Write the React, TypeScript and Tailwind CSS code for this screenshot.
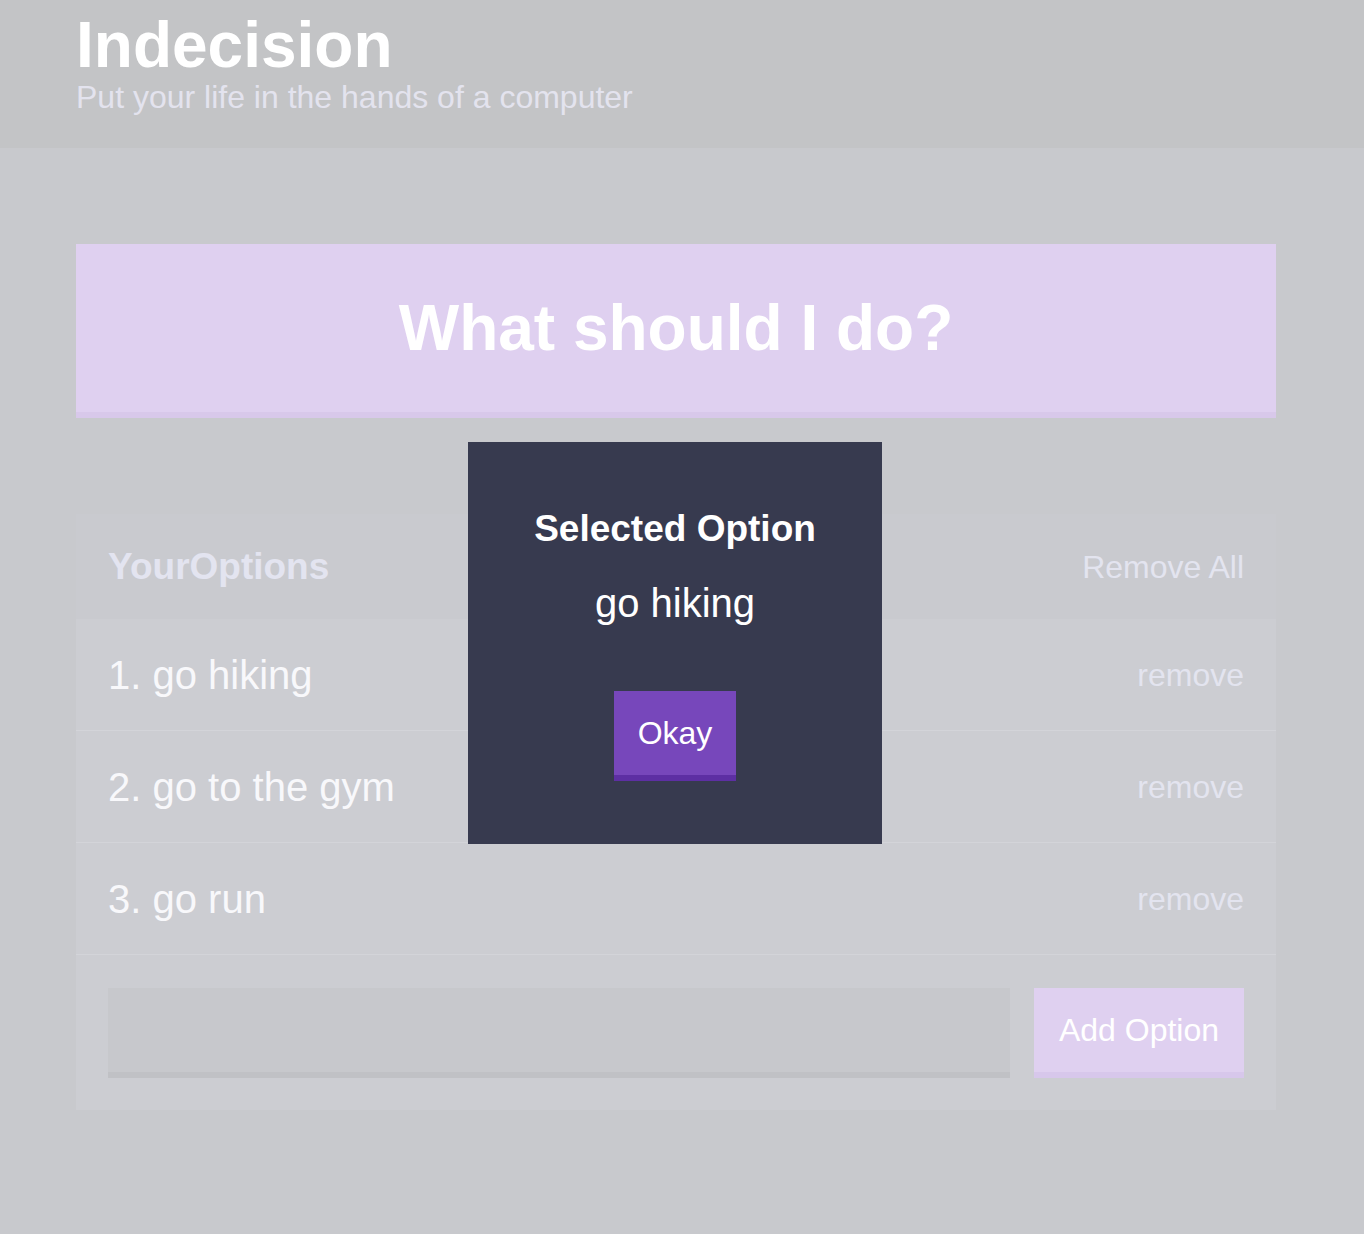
const options = ["go hiking", "go to the gym", "go run"];

function Option({ index, text }: { index: number; text: string }) {
  return (
    <div className="flex h-[112px] items-center justify-between border-b border-[#d3d4d9] bg-[#cccdd2] px-8">
      <p className="text-[40px] leading-none text-[#f8f8fb]">
        {index}. {text}
      </p>
      <button className="text-[32px] leading-none text-[#e3e4ef]">remove</button>
    </div>
  );
}

export default function App() {
  return (
    <div className="relative min-h-[1234px] bg-[#c8c9cd] font-['Liberation_Sans',Arial,sans-serif]">
      <header className="h-[148px] bg-[#c3c4c6] pl-[76px] pt-[13px]">
        <h1 className="text-[64px] font-bold leading-none text-white">Indecision</h1>
        <h2 className="mt-[4px] text-[32px] leading-none text-[#e3e3ee]">Put your life in the hands of a computer</h2>
      </header>

      <main className="ml-[76px] w-[1200px] pb-[124px]">
        <button className="mt-[96px] flex h-[174px] w-full items-center justify-center border-b-[6px] border-[#d8c8ea] bg-[#dfd0f0] text-[64px] font-bold leading-none text-white">
          What should I do?
        </button>

        <div className="mt-[96px] bg-[#cccdd2]">
          <div className="flex h-[105px] items-center justify-between bg-[#c9cacf] px-8">
            <h3 className="text-[37px] font-bold leading-none text-[#e3e4f0]">YourOptions</h3>
            <button className="text-[32px] leading-none text-[#e3e4ef]">Remove All</button>
          </div>
          {options.map((o, i) => (
            <Option key={o} index={i + 1} text={o} />
          ))}
          <form className="flex gap-6 px-8 pb-[32px] pt-[33px]">
            <input className="h-[90px] flex-1 border-b-[6px] border-[#c0c1c5] bg-[#c7c8cc] outline-none" />
            <button type="button" className="h-[90px] w-[210px] border-b-[6px] border-[#d7c7eb] bg-[#dfd0f0] text-[32px] leading-none text-white">
              Add Option
            </button>
          </form>
        </div>
      </main>

      <div className="absolute left-[468px] top-[442px] flex h-[402px] w-[414px] flex-col items-center bg-[#373a4f] pt-[68px] text-white">
        <h3 className="text-[37px] font-bold leading-none">Selected Option</h3>
        <p className="mt-[36px] text-[40px] leading-none">go hiking</p>
        <button className="mt-[68px] h-[90px] border-b-[6px] border-[#5d2fa3] bg-[#7747bb] px-6 text-[32px] leading-none text-white">
          Okay
        </button>
      </div>
    </div>
  );
}
